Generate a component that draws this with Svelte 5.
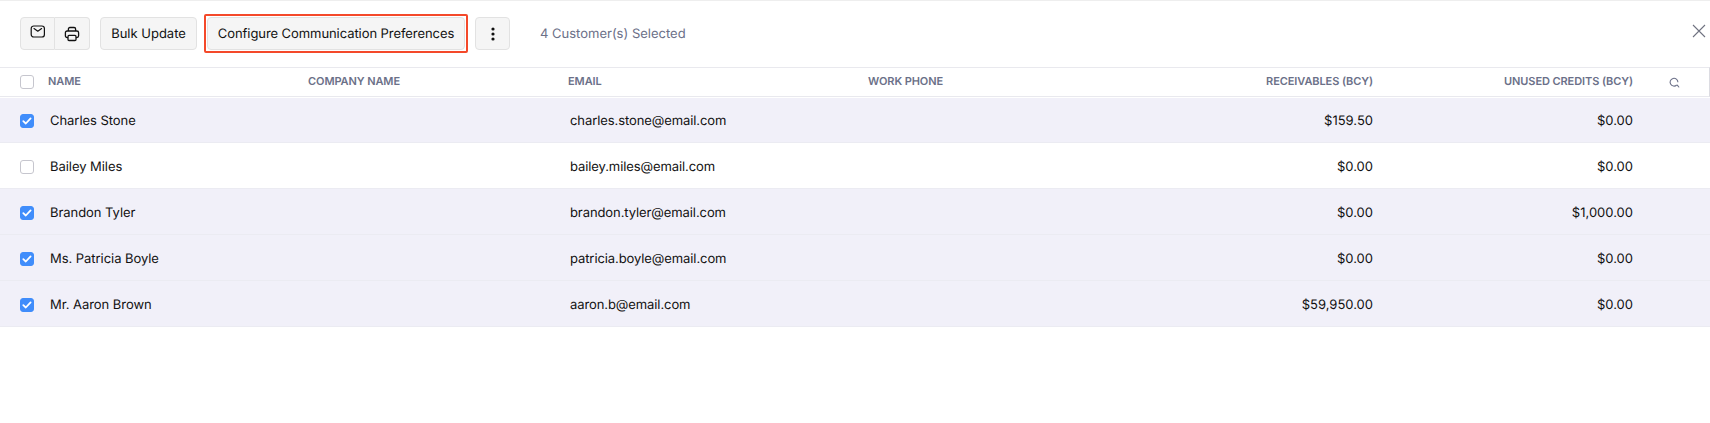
<script>
  const rows = [
    { name: 'Charles Stone', email: 'charles.stone@email.com', rec: '$159.50', cred: '$0.00', on: true },
    { name: 'Bailey Miles', email: 'bailey.miles@email.com', rec: '$0.00', cred: '$0.00', on: false },
    { name: 'Brandon Tyler', email: 'brandon.tyler@email.com', rec: '$0.00', cred: '$1,000.00', on: true },
    { name: 'Ms. Patricia Boyle', email: 'patricia.boyle@email.com', rec: '$0.00', cred: '$0.00', on: true },
    { name: 'Mr. Aaron Brown', email: 'aaron.b@email.com', rec: '$59,950.00', cred: '$0.00', on: true }
  ];
</script>

<div class="page">
  <div class="toolbar">
    <div class="group">
      <button class="icon first" aria-label="Email">
        <svg class="mail" width="16" height="14" viewBox="0 0 16 14" fill="none" stroke="#111" stroke-width="1.2"><rect x="1.2" y="1" width="13.2" height="11" rx="2.6"/><path d="M4 3.6 7.8 6.2 11.6 3.6" stroke-linecap="round" stroke-linejoin="round"/></svg>
      </button>
      <button class="icon" aria-label="Print">
        <svg width="16" height="16" viewBox="0 0 16 16" fill="none" stroke="#111" stroke-width="1.3"><path d="M4.4 5V3C4.4 2.1 5 1.5 5.9 1.5h4.2c.9 0 1.5.6 1.5 1.5V5"/><path d="M4 11.6H3.2c-1 0-1.8-.8-1.8-1.8V6.8C1.4 5.800 2.200 5 3.200 5h9.600c1 0 1.800.8 1.800 1.800v3c0 1-.8 1.800-1.800 1.800H12"/><rect x="4" y="9.400" width="8" height="5.100" rx="1"/></svg>
      </button>
    </div>
    <button class="btn bulk">Bulk Update</button>
    <div class="focus"><button class="btn">Configure Communication Preferences</button></div>
    <button class="more" aria-label="More">
      <svg width="4" height="14" viewBox="0 0 4 14" fill="#111"><circle cx="2" cy="2" r="1.6"/><circle cx="2" cy="7" r="1.6"/><circle cx="2" cy="12" r="1.6"/></svg>
    </button>
    <span class="count">4 Customer(s) Selected</span>
    <svg class="close" width="14" height="14" viewBox="0 0 14 14" fill="none" stroke="#6f7280" stroke-width="1.1"><path d="M1 1 13 13M13 1 1 13"/></svg>
  </div>

  <div class="row head">
    <span class="check"><span class="box"></span></span>
    <span class="h-name">NAME</span>
    <span>COMPANY NAME</span>
    <span class="h-email">EMAIL</span>
    <span>WORK PHONE</span>
    <span class="num">RECEIVABLES (BCY)</span>
    <span class="num">UNUSED CREDITS (BCY)</span>
    <span class="search">
      <svg width="11" height="11" viewBox="0 0 11 11" fill="none" stroke="#6b7088" stroke-width="1.1"><path d="M7.700 8A3.900 3.900 0 1 1 8.900 5.200"/><path d="M8.300 8.200 9.800 10" stroke-linecap="round"/></svg>
    </span>
  </div>

  {#each rows as r}
    <div class="row body" class:selected={r.on}>
      <span class="check">
        {#if r.on}
          <span class="box on">
            <svg width="10" height="8" viewBox="0 0 10 8" fill="none" stroke="#fff" stroke-width="1.8" stroke-linecap="round" stroke-linejoin="round"><path d="M1.300 4.200 3.800 6.500 8.600 1.400"/></svg>
          </span>
        {:else}
          <span class="box"></span>
        {/if}
      </span>
      <span class="cell b-name">{r.name}</span>
      <span></span>
      <span class="cell b-email">{r.email}</span>
      <span></span>
      <span class="cell num">{r.rec}</span>
      <span class="cell num">{r.cred}</span>
      <span></span>
    </div>
  {/each}
</div>

<style>
  :global(body) {
    margin: 0;
    background: #fff;
  }
  .page {
    font-family: Inter, "Liberation Sans", sans-serif;
    font-size: 13px;
    color: #111;
    height: 423px;
    overflow: hidden;
    border-top: 1px solid #eeeeee;
    box-sizing: border-box;
    text-rendering: geometricPrecision;
  }
  .toolbar {
    display: flex;
    align-items: center;
    height: 66px;
    padding-left: 20px;
    padding-bottom: 1px;
    position: relative;
    box-sizing: border-box;
  }
  button {
    font: inherit;
    color: inherit;
    background: #f5f5f5;
    border: 1px solid #e2e2e2;
    border-radius: 4px;
    padding: 0;
    height: 33px;
    box-sizing: border-box;
    text-rendering: inherit;
  }
  .group {
    display: flex;
    width: 70px;
  }
  .icon {
    width: 35px;
    display: flex;
    align-items: center;
    justify-content: center;
    border-radius: 0 4px 4px 0;
    border-left: 0;
  }
  .icon.first {
    border-left: 1px solid #e2e2e2;
    border-radius: 4px 0 0 4px;
  }
  .mail {
    margin-bottom: 3px;
  }
  .btn {
    padding: 0 10px;
    white-space: nowrap;
  }
  .bulk {
    margin-left: 10px;
    width: 97px;
  }
  .focus {
    margin-left: 7px;
    border: 2px solid #f4492a;
    border-radius: 2px;
    padding: 1px;
    display: flex;
    width: 264px;
    box-sizing: border-box;
  }
  .focus .btn {
    width: 100%;
    padding: 0;
    letter-spacing: -0.07px;
  }
  .more {
    margin-left: 7px;
    width: 35px;
    display: flex;
    align-items: center;
    justify-content: center;
  }
  .count {
    margin-left: 30px;
    color: #6b7088;
  }
  .close {
    position: absolute;
    right: 4px;
    top: 23px;
  }
  .row {
    display: grid;
    grid-template-columns: 48px 260px 260px 300px 1fr 260px 260px 77px;
    align-items: center;
    box-sizing: border-box;
  }
  .row.head {
    height: 30px;
    margin-bottom: 1px;
    padding-bottom: 2px;
    border-top: 1px solid #e9e9ee;
    border-bottom: 1px solid #e9e9ee;
    border-right: 1px solid #dcdce2;
    font-size: 11px;
    font-weight: 600;
    letter-spacing: -0.09px;
    color: #6b7088;
    grid-template-columns: 48px 260px 260px 300px 1fr 260px 260px 76px;
  }
  .head .check,
  .head .search {
    margin-top: 2px;
  }
  .row.body {
    height: 46px;
    border-bottom: 1px solid #ebebf2;
  }
  .row.body:nth-child(3) {
    height: 45px;
  }
  .row.selected {
    background: #f1f0f9;
  }
  .check {
    padding-left: 20px;
    display: flex;
  }
  .body .check {
    margin-top: 2px;
  }
  .body .cell {
    padding-top: 2px;
  }
  .box {
    width: 14px;
    height: 14px;
    border: 1px solid #c6c6ce;
    border-radius: 3px;
    background: #fff;
    box-sizing: border-box;
    display: flex;
    align-items: center;
    justify-content: center;
  }
  .box.on {
    background: #408dfb;
    border-color: #408dfb;
  }
  .b-name,
  .b-email {
    padding-left: 2px;
  }
  .b-name {
    letter-spacing: -0.05px;
  }
  .b-email {
    letter-spacing: -0.09px;
  }
  .num {
    text-align: right;
  }
  .search {
    display: flex;
    justify-content: flex-end;
    padding-right: 29px;
  }
</style>
